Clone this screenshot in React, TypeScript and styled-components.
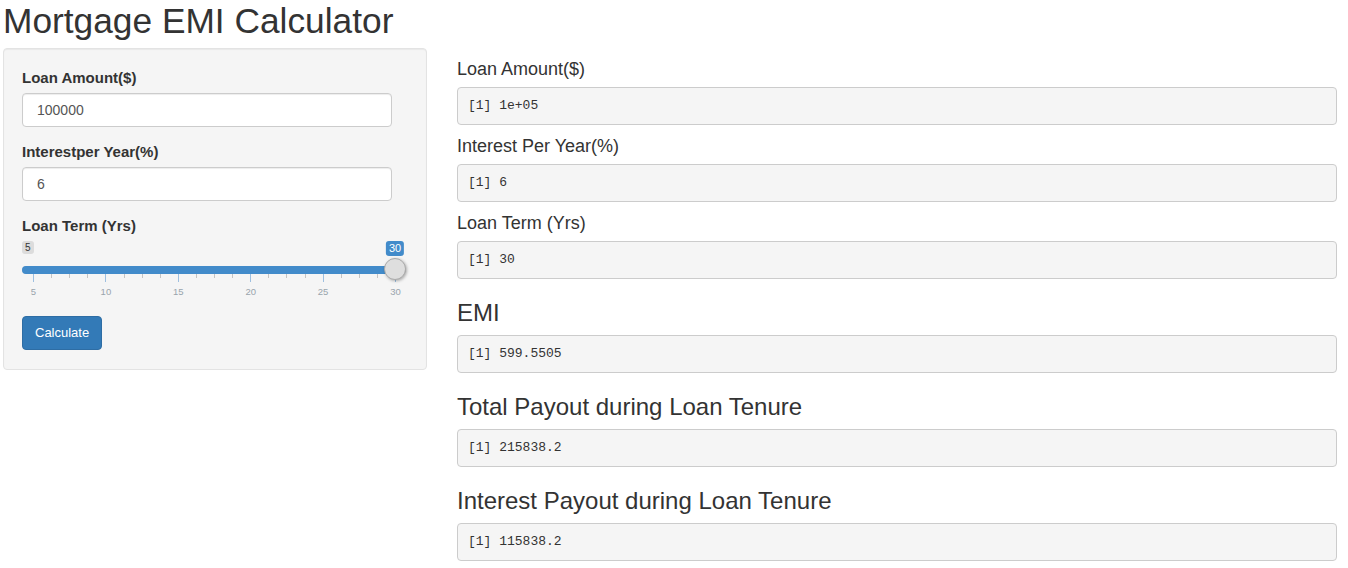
import React from "react";
import styled, { createGlobalStyle } from "styled-components";

const Global = createGlobalStyle`
  html, body { margin: 0; padding: 0; background: #fff; }
  body {
    font-family: "Liberation Sans", Arial, sans-serif;
    font-size: 14px;
    line-height: 1.42857;
    color: #333;
  }
  * { box-sizing: border-box; }
`;

const Page = styled.div`
  padding: 0 11px 0 3px;
`;

const Title = styled.h2`
  margin: 2px 0 8px;
  font-size: 35.3px;
  font-weight: 400;
  line-height: 38px;
  color: #333;
`;

const Row = styled.div`
  display: grid;
  grid-template-columns: 424px 1fr;
  column-gap: 30px;
  align-items: start;
`;

const Well = styled.div`
  background: #f5f5f5;
  border: 1px solid #e3e3e3;
  border-radius: 4px;
  padding: 19px 19px 19px 18px;
  box-shadow: inset 0 1px 1px rgba(0, 0, 0, 0.05);
  display: flex;
  flex-direction: column;
  align-items: flex-start;
`;

const FormGroup = styled.div<{ $w: number }>`
  width: ${(p) => p.$w}px;
  margin-bottom: 15px;
  display: flex;
  flex-direction: column;
`;

const Label = styled.label`
  display: block;
  font-weight: 700;
  font-size: 15px;
  line-height: 20px;
  margin-bottom: 5px;
  color: #333;
`;

const Input = styled.input`
  width: 100%;
  height: 34px;
  padding: 6px 14px;
  font-family: "Liberation Sans", Arial, sans-serif;
  font-size: 14px;
  line-height: 20px;
  color: #555;
  background: #fff;
  border: 1px solid #ccc;
  border-radius: 4px;
  box-shadow: inset 0 1px 1px rgba(0, 0, 0, 0.075);
  outline: none;
`;

const SliderBox = styled.div`
  position: relative;
  width: 384px;
  height: 60px;
`;

const SliderLine = styled.div`
  position: absolute;
  top: 25px;
  left: 0;
  right: 0;
  height: 8px;
  border-radius: 8px;
  background: #ededed;
  border: 1px solid #cccccc;
`;

const SliderBar = styled.div`
  position: absolute;
  top: 25px;
  left: 0;
  height: 8px;
  border-radius: 8px 0 0 8px;
  background: #428bca;
`;

const Handle = styled.div`
  position: absolute;
  top: 17px;
  width: 22px;
  height: 22px;
  border-radius: 50%;
  background: #dedede;
  border: 1px solid #ababab;
  box-shadow: 1px 1px 3px rgba(0, 0, 0, 0.3);
`;

const Badge = styled.span<{ $active?: boolean }>`
  position: absolute;
  top: 0;
  padding: 1px 3px;
  border-radius: 3px;
  font-size: ${(p) => (p.$active ? 11 : 10)}px;
  line-height: ${(p) => (p.$active ? 13 : 11)}px;
  color: ${(p) => (p.$active ? "#fff" : "#333")};
  background: ${(p) => (p.$active ? "#428bca" : "rgba(0,0,0,0.1)")};
  white-space: nowrap;
`;

const Grid = styled.div`
  position: absolute;
  top: 33px;
  left: 11px;
  width: 362px;
  height: 20px;
`;

const Tick = styled.span<{ $major: boolean }>`
  position: absolute;
  top: 0;
  width: 1px;
  height: ${(p) => (p.$major ? 8 : 4)}px;
  background: ${(p) => (p.$major ? "#9dbfe0" : "#c4c4c4")};
`;

const TickText = styled.span`
  position: absolute;
  top: 13px;
  transform: translateX(-50%);
  font-size: 9.5px;
  line-height: 9px;
  color: #99a4ac;
  white-space: nowrap;
`;

const Button = styled.button`
  font-family: "Liberation Sans", Arial, sans-serif;
  font-size: 13px;
  line-height: 20px;
  padding: 6px 12px;
  height: 34px;
  color: #fff;
  background: #337ab7;
  border: 1px solid #2e6da4;
  border-radius: 4px;
  cursor: pointer;
`;

const Main = styled.div`
  display: flex;
  flex-direction: column;
  padding-top: 11px;
`;

const OutLabel = styled.div`
  font-size: 18px;
  line-height: 20px;
  margin: 0 0 8px;
  color: #333;
`;

const OutHeading = styled.h3`
  font-size: 24px;
  font-weight: 400;
  line-height: 26px;
  margin: 10px 0 9px;
  color: #333;
`;

const Pre = styled.pre`
  margin: 0 0 11px;
  height: 38px;
  padding: 9px 10px;
  font-family: "Liberation Mono", "Courier New", monospace;
  font-size: 13px;
  line-height: 18px;
  color: #333;
  background: #f5f5f5;
  border: 1px solid #ccc;
  border-radius: 4px;
  overflow: hidden;
`;

const Slider: React.FC<{ min: number; max: number; value: number }> = ({ min, max, value }) => {
  const W = 384;
  const H = 22;
  const range = W - H;
  const pct = (value - min) / (max - min);
  const center = H / 2 + pct * range;
  const ticks = Array.from({ length: 21 }, (_, i) => i);
  const labels = [5, 10, 15, 20, 25, 30];
  return (
    <SliderBox>
      <SliderLine />
      <SliderBar style={{ width: center }} />
      <Badge style={{ left: 0 }}>{min}</Badge>
      <Grid>
        {ticks.map((i) => (
          <Tick key={i} $major={i % 4 === 0} style={{ left: (i / 20) * range }} />
        ))}
        {labels.map((l) => (
          <TickText key={l} style={{ left: ((l - min) / (max - min)) * range + 0.5 }}>
            {l}
          </TickText>
        ))}
      </Grid>
      <Handle style={{ left: pct * range }} />
      <Badge $active style={{ left: center, transform: "translateX(-50%)" }}>
        {value}
      </Badge>
    </SliderBox>
  );
};

export default function App() {
  return (
    <Page>
      <Global />
      <Title>Mortgage EMI Calculator</Title>
      <Row>
        <Well>
          <FormGroup $w={370}>
            <Label>Loan Amount($)</Label>
            <Input defaultValue="100000" />
          </FormGroup>
          <FormGroup $w={370}>
            <Label>Interestper Year(%)</Label>
            <Input defaultValue="6" />
          </FormGroup>
          <FormGroup $w={384}>
            <Label>Loan Term (Yrs)</Label>
            <Slider min={5} max={30} value={30} />
          </FormGroup>
          <Button>Calculate</Button>
        </Well>
        <Main>
          <OutLabel>Loan Amount($)</OutLabel>
          <Pre>[1] 1e+05</Pre>
          <OutLabel>Interest Per Year(%)</OutLabel>
          <Pre>[1] 6</Pre>
          <OutLabel>Loan Term (Yrs)</OutLabel>
          <Pre>[1] 30</Pre>
          <OutHeading>EMI</OutHeading>
          <Pre>[1] 599.5505</Pre>
          <OutHeading>Total Payout during Loan Tenure</OutHeading>
          <Pre>[1] 215838.2</Pre>
          <OutHeading>Interest Payout during Loan Tenure</OutHeading>
          <Pre>[1] 115838.2</Pre>
        </Main>
      </Row>
    </Page>
  );
}
